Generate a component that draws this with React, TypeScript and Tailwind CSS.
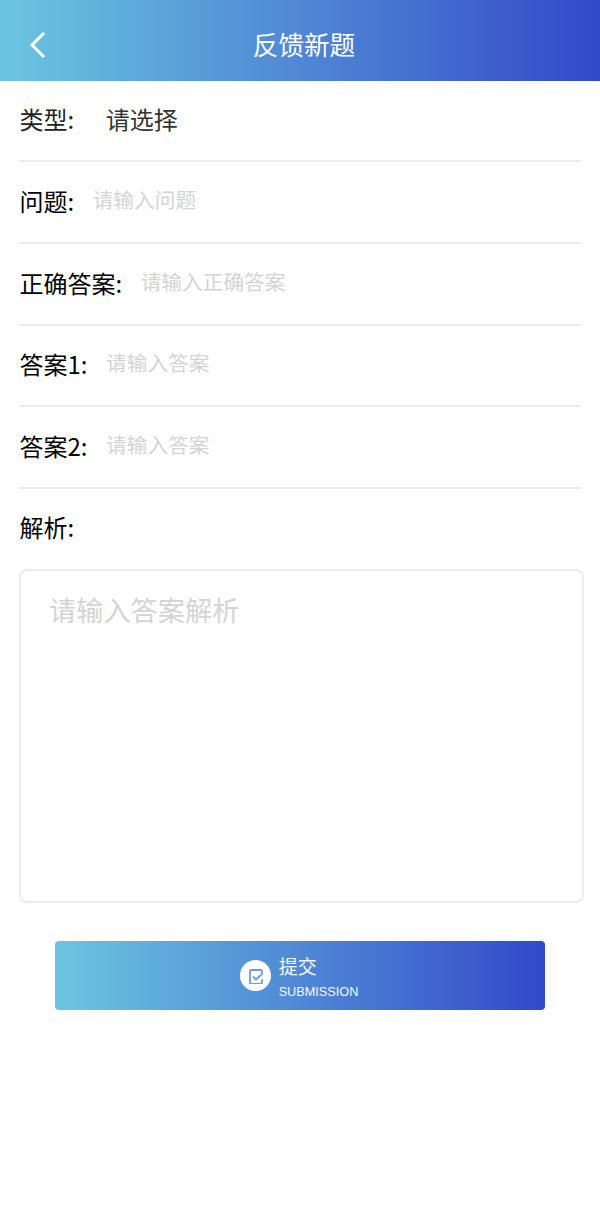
const font = { fontFamily: '"Noto Sans CJK SC", "Liberation Sans", sans-serif' };

function Row({ label, hint, height }: { label: string; hint: string; height: string }) {
  return (
    <div className={`mx-[19px] flex items-center border-b-2 border-[#ececec] pb-[3px] pl-[0.5px] ${height}`}>
      <span className="text-[24px] leading-[32px] text-black">{label}</span>
      <span className="-mt-[4px] ml-[18.5px] text-[20.7px] leading-[28px] text-[#d4d4d4]">{hint}</span>
    </div>
  );
}

export default function App() {
  return (
    <div className="flex h-[1217px] w-[600px] flex-col bg-white" style={font}>
      <header className="relative flex h-[81px] items-center justify-center bg-linear-to-r/srgb from-[#6bc6e0] to-[#3349c9] pt-[6px] pl-[8px]">
        <svg className="absolute left-[28px] top-[31px]" width="20" height="28" viewBox="0 0 20 28" fill="none">
          <path d="M16 2 L4 14 L16 26" stroke="white" strokeWidth="3" />
        </svg>
        <h1 className="text-[25.6px] font-normal leading-[32px] text-white">反馈新题</h1>
      </header>

      <div className="mx-[19px] flex h-[81px] items-center border-b-2 border-[#ececec] pb-[3px] pl-[0.5px]">
        <span className="text-[24px] leading-[32px] text-[#222222]">类型:</span>
        <span className="ml-[31.5px] text-[24px] leading-[32px] text-[#333333]">请选择</span>
      </div>
      <Row label="问题:" hint="请输入问题" height="h-[82px]" />
      <Row label="正确答案:" hint="请输入正确答案" height="h-[82px]" />
      <Row label="答案1:" hint="请输入答案" height="h-[81px]" />
      <Row label="答案2:" hint="请输入答案" height="h-[82px]" />

      <div className="mx-[19.5px] mt-[22px] text-[24px] leading-[32px] text-black">解析:</div>

      <div className="ml-[19px] mr-[16px] mt-[26px] h-[334px] rounded-[8px] border-2 border-[#ececec] px-[29px] py-[20px]">
        <p className="-ml-[1px] text-[27.2px] leading-[36px] text-[#d4d4d4]">请输入答案解析</p>
      </div>

      <button className="mx-auto mt-[38px] flex h-[69px] w-[490px] items-center justify-center gap-[8px] rounded-[4px] bg-linear-to-r/srgb from-[#6bc6e0] to-[#3349c9] pr-[2px]">
        <span className="flex h-[31px] w-[31px] items-center justify-center rounded-full bg-white">
          <svg width="16" height="16" viewBox="-1 -1 16 16" fill="none" stroke="#6a9fd8" strokeWidth="1.8" strokeLinejoin="round" strokeLinecap="round">
            <path d="M14 5 V2 a1 1 0 0 0 -1 -1 H3 a1 1 0 0 0 -1 1 V14 a1 1 0 0 0 1 1 H13 a1 1 0 0 0 1 -1 V11" />
            <path d="M5.5 8 L8 10.5 L13 6" />
          </svg>
        </span>
        <span className="flex flex-col items-start pt-[2px] text-[#f4f8fd]">
          <span className="text-[19px] leading-[26px]">提交</span>
          <span className="mt-[5px] text-[12.7px] leading-[16px]" style={{ fontFamily: '"Liberation Sans", sans-serif' }}>
            SUBMISSION
          </span>
        </span>
      </button>
    </div>
  );
}
